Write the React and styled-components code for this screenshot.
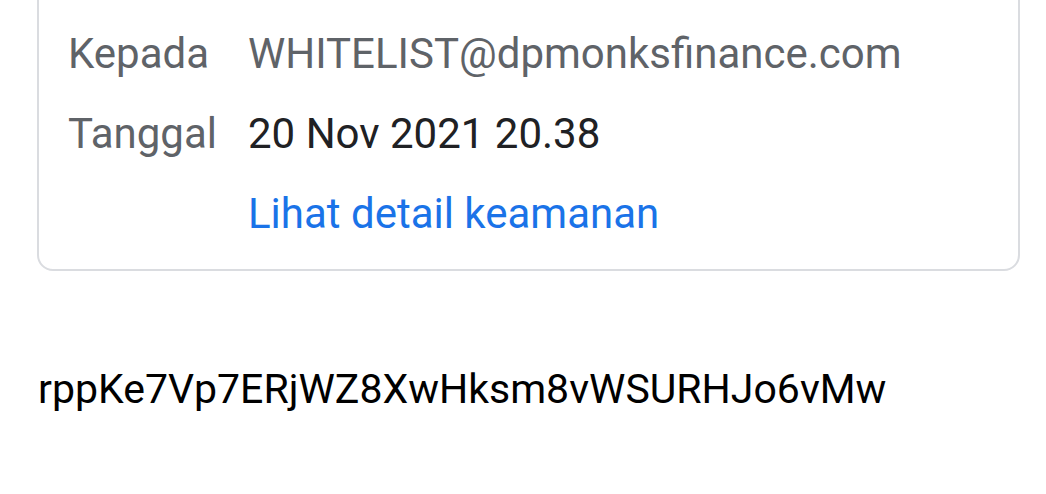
import React from "react";
import styled, { createGlobalStyle } from "styled-components";

const Global = createGlobalStyle`
  html, body {
    margin: 0;
    padding: 0;
    background: #ffffff;
  }
  body {
    font-family: Roboto, "Noto Sans", "Liberation Sans", sans-serif;
    -webkit-font-smoothing: antialiased;
  }
`;

const Page = styled.div`
  width: 1046px;
  height: 494px;
  overflow: hidden;
  padding: 0 26px 0 37px;
  box-sizing: border-box;
`;

const Card = styled.section`
  margin-top: -40px;
  padding: 52px 24px 15px 29px;
  border: 2px solid #dadce0;
  border-radius: 16px;
  display: grid;
  grid-template-columns: 180px 1fr;
  font-size: 42px;
  line-height: 80px;
`;

const Label = styled.div`
  color: #5f6368;
  white-space: nowrap;
`;

const Value = styled.div`
  color: ${(p) => (p.$muted ? "#5f6368" : "#202124")};
  white-space: nowrap;
`;

const Link = styled.a`
  grid-column: 2;
  color: #1a73e8;
  text-decoration: none;
  white-space: nowrap;
`;

const Body = styled.p`
  margin: 78px 0 0 1px;
  font-size: 41px;
  line-height: 80px;
  color: #000000;
  white-space: nowrap;
`;

export default function App() {
  return (
    <Page>
      <Global />
      <Card>
        <Label>Kepada</Label>
        <Value $muted>WHITELIST@dpmonksfinance.com</Value>
        <Label>Tanggal</Label>
        <Value>20 Nov 2021 20.38</Value>
        <Link href="#">Lihat detail keamanan</Link>
      </Card>
      <Body>rppKe7Vp7ERjWZ8XwHksm8vWSURHJo6vMw</Body>
    </Page>
  );
}
